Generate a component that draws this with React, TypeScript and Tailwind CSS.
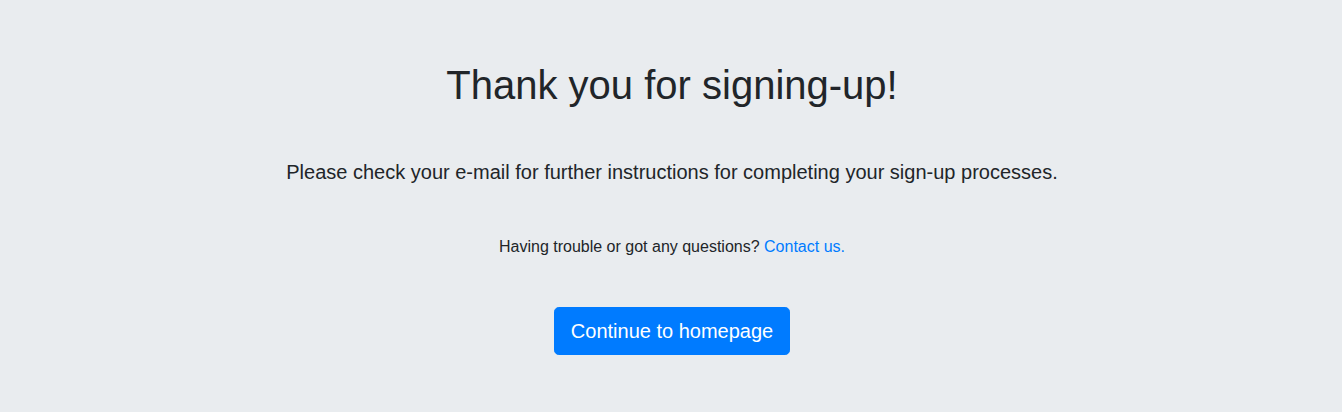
export default function App() {
  return (
    <div
      className="min-h-screen w-full bg-[#e9ecef] text-[#212529] flex flex-col items-center text-center pl-[2px]"
      style={{ fontFamily: '"Liberation Sans", Arial, sans-serif' }}
    >
      <h1 className="mt-[61px] text-[40px] leading-[48px] font-normal">Thank you for signing-up!</h1>
      <p className="mt-[48px] text-[20px] leading-[30px]">
        Please check your e-mail for further instructions for completing your sign-up processes.
      </p>
      <p className="mt-[48px] text-[16px] leading-[24px]">
        Having trouble or got any questions?{" "}
        <a href="#" className="text-[#007bff]">Contact us.</a>
      </p>
      <a
        href="#"
        className="mt-[48px] inline-block bg-[#007bff] border border-[#007bff] text-white text-[20px] leading-[30px] px-4 py-2 rounded-[0.3rem]"
      >
        Continue to homepage
      </a>
    </div>
  );
}
